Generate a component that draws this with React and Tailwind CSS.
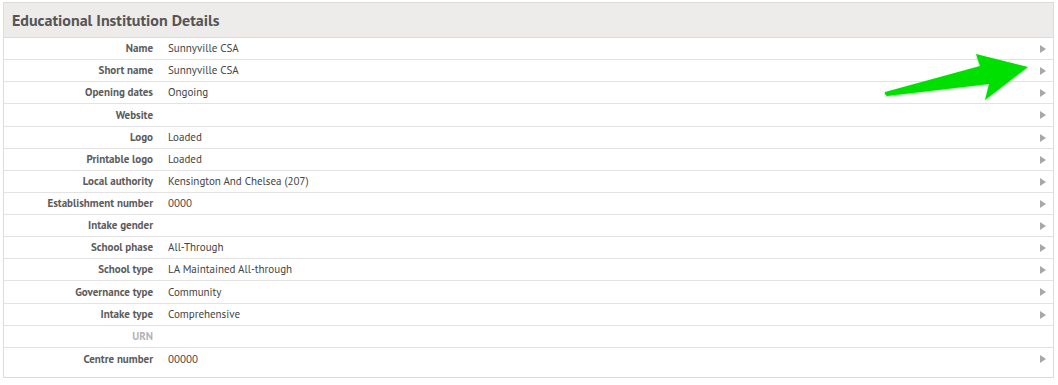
import React from "react";

const rows = [
  ["Name", "Sunnyville CSA", true],
  ["Short name", "Sunnyville CSA", true],
  ["Opening dates", "Ongoing", true],
  ["Website", "", true],
  ["Logo", "Loaded", true],
  ["Printable logo", "Loaded", true],
  ["Local authority", "Kensington And Chelsea (207)", true],
  ["Establishment number", "0000", true],
  ["Intake gender", "", true],
  ["School phase", "All-Through", true],
  ["School type", "LA Maintained All-through", true],
  ["Governance type", "Community", true],
  ["Intake type", "Comprehensive", true],
  ["URN", "", false],
  ["Centre number", "00000", true],
];

function Tri() {
  return (
    <svg width="6" height="8" viewBox="0 0 6 8" className="block">
      <path d="M0 0 L6 4 L0 8 Z" fill="#a8a8a8" />
    </svg>
  );
}

export default function App() {
  return (
    <div className="relative w-[1058px] h-[385px] bg-white pt-[2px] pl-[3px]" style={{ fontFamily: '"PT Sans", Lato, "Open Sans", sans-serif' }}>
      <div className="w-[1051px] border border-[#dcdcdc] bg-white">
        <div className="h-[35px] bg-[#eeeceb] border-b border-[#dcdcdc] flex items-center pl-[8px]">
          <span className="text-[16px] font-bold text-[#555]">Educational Institution Details</span>
        </div>
        <div className="pb-[7px]">
          {rows.map(([label, value, active], i) => (
            <div
              key={label}
              className={`flex items-center ${i === 3 || i === 11 ? "h-[23px]" : "h-[22px]"} ${i < rows.length - 1 ? "border-b border-[#e3e3e3]" : ""}`}
            >
              <div className={`w-[149px] text-right text-[11px] font-bold ${active ? "text-[#5b5b5b]" : "text-[#b4b4b4]"}`}>
                {label}
              </div>
              <div className="flex-1 pl-[15px] text-[11px] text-[#444]">{value}</div>
              <div className="w-[13px] flex justify-start">{active && <Tri />}</div>
            </div>
          ))}
        </div>
      </div>
      <svg className="absolute left-0 top-0 pointer-events-none" width="1058" height="385">
        <defs>
          <filter id="sh" x="-10%" y="-10%" width="120%" height="140%">
            <feDropShadow dx="0" dy="1" stdDeviation="1" floodColor="#000" floodOpacity="0.25" />
          </filter>
        </defs>
        <path d="M885 92 Q884 94 887 96 L989 84 L985 100 L1028 67 L976 54 L980 66 Z" fill="#00e000" filter="url(#sh)" />
      </svg>
    </div>
  );
}
